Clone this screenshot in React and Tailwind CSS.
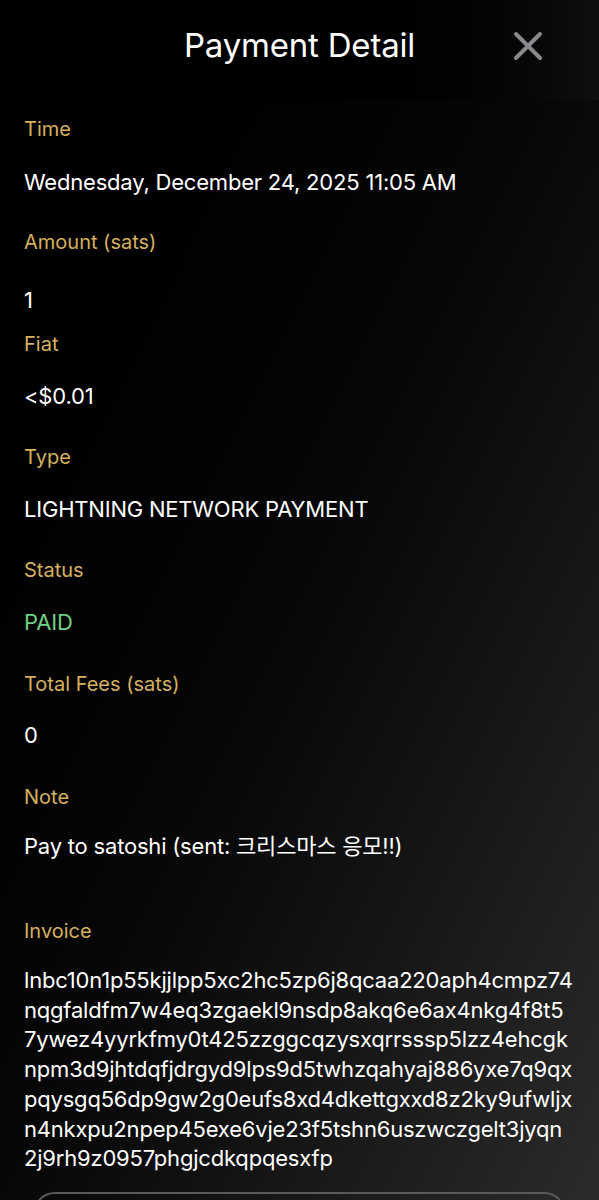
import React from 'react';

const invoiceLines = [
  'lnbc10n1p55kjjlpp5xc2hc5zp6j8qcaa220aph4cmpz74',
  'nqgfaldfm7w4eq3zgaekl9nsdp8akq6e6ax4nkg4f8t5',
  '7ywez4yyrkfmy0t425zzggcqzysxqrrsssp5lzz4ehcgk',
  'npm3d9jhtdqfjdrgyd9lps9d5twhzqahyaj886yxe7q9qx',
  'pqysgq56dp9gw2g0eufs8xd4dkettgxxd8z2ky9ufwljx',
  'n4nkxpu2npep45exe6vje23f5tshn6uszwczgelt3jyqn',
  '2j9rh9z0957phgjcdkqpqesxfp',
];

function Field({ label, value, top, gap, valueClass = 'text-white' }) {
  return (
    <div className={top}>
      <div className="text-[20px] leading-[28px] text-[#d6b05e]">{label}</div>
      <div className={`${gap} text-[22px] leading-[30px] tracking-[-0.2px] ${valueClass}`}>{value}</div>
    </div>
  );
}

export default function App() {
  return (
    <div
      className="h-[1200px] w-full overflow-hidden bg-linear-to-br from-black via-[#070707] to-[#2b2b2b] text-white"
      style={{ fontFamily: 'Inter, "Noto Sans CJK KR", sans-serif' }}
    >
      <header className="relative flex h-[100px] items-center justify-center bg-linear-to-r from-black via-black to-[#0f0f0f] pb-[8px]">
        <h1 className="text-[33px] font-normal tracking-[-0.2px]">Payment Detail</h1>
        <button className="absolute right-[56px] top-[31px] text-[#8a8a8e]" aria-label="Close">
          <svg width="30" height="30" viewBox="0 0 30 30" fill="none" stroke="currentColor" strokeWidth="4" strokeLinecap="round">
            <path d="M3 3 L27 27 M27 3 L3 27" />
          </svg>
        </button>
      </header>

      <main className="px-[24px]">
        <Field label="Time" value="Wednesday, December 24, 2025 11:05 AM" top="mt-[15px]" gap="mt-[24px]" />
        <Field label="Amount (sats)" value="1" top="mt-[31px]" gap="mt-[29px]" />
        <Field label="Fiat" value="<$0.01" top="mt-[15px]" gap="mt-[23px]" />
        <Field label="Type" value="LIGHTNING NETWORK PAYMENT" top="mt-[32px]" gap="mt-[23px]" />
        <Field label="Status" value="PAID" top="mt-[32px]" gap="mt-[23px]" valueClass="text-[#72d086]" />
        <Field label="Total Fees (sats)" value="0" top="mt-[33px]" gap="mt-[22px]" />
        <Field label="Note" value="Pay to satoshi (sent: 크리스마스 응모!!)" top="mt-[33px]" gap="mt-[20px]" />

        <div className="mt-[56px]">
          <div className="text-[20px] leading-[28px] text-[#d6b05e]">Invoice</div>
          <div className="mt-[21px] text-[22px] leading-[29.7px] tracking-[-0.2px] text-white">
            {invoiceLines.map((l) => (
              <div key={l}>{l}</div>
            ))}
          </div>
        </div>

        <button className="mx-[9px] mt-[18px] block h-[56px] w-[533px] rounded-[22px] border-2 border-[#5a5a5a]" />
      </main>
    </div>
  );
}
